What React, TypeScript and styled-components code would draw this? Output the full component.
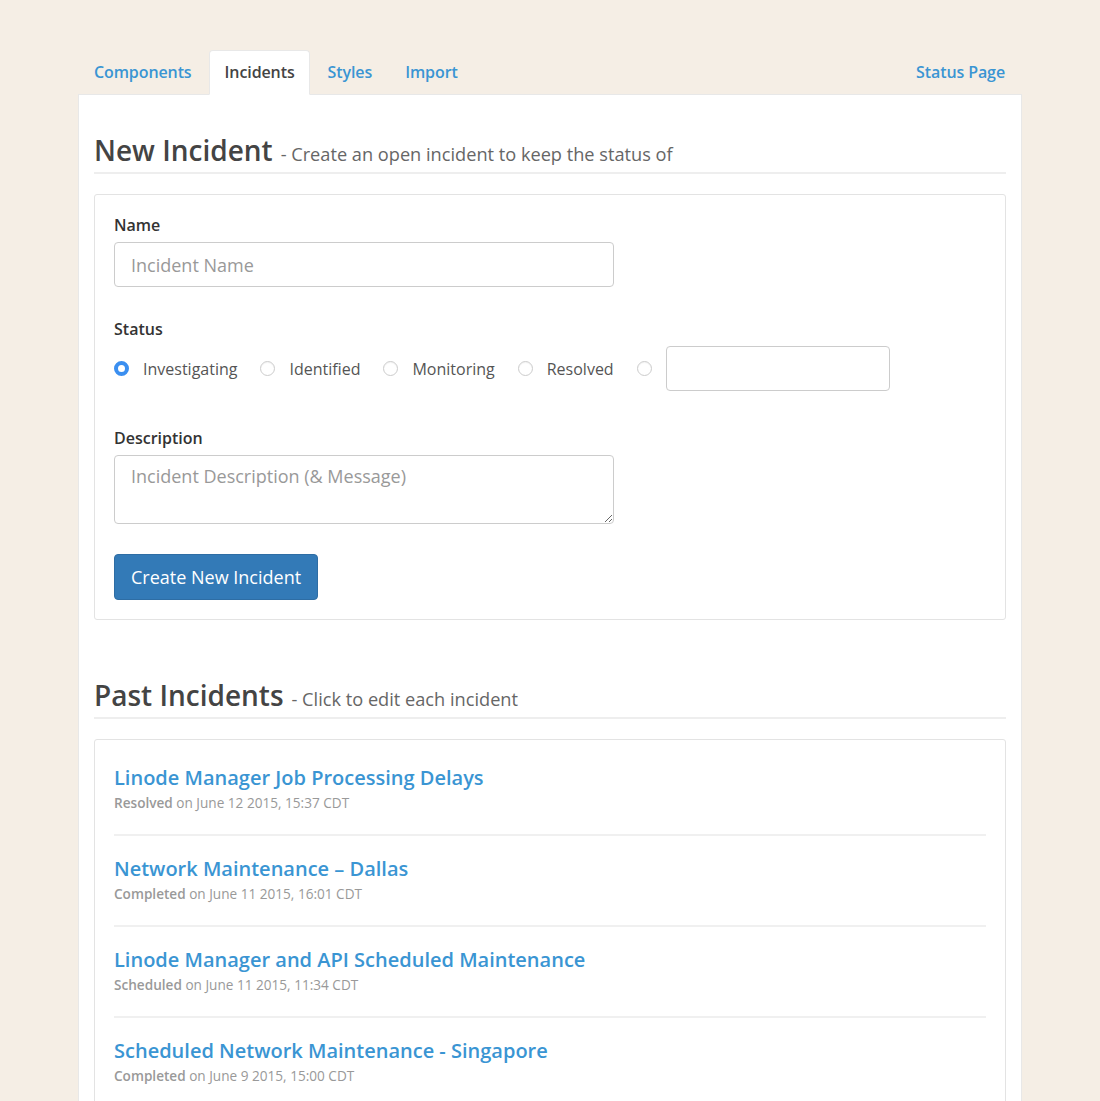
import React from 'react';
import styled, { createGlobalStyle } from 'styled-components';

const GlobalStyle = createGlobalStyle`
  html, body {
    margin: 0;
    padding: 0;
    background: #f5eee5;
    font-family: "Open Sans", "Noto Sans", sans-serif;
    color: #333;
  }
  * { box-sizing: border-box; }
`;

const Page = styled.div`
  width: 944px;
  margin: 0 auto;
  padding-top: 50px;
  height: 1101px;
  overflow: hidden;
`;

const Tabs = styled.div`
  display: flex;
  align-items: flex-end;
  margin-bottom: -1px;
  position: relative;
  z-index: 1;
`;

const Tab = styled.a<{ $active?: boolean }>`
  display: block;
  padding: 11px 14px 11px 15px;
  margin-right: 2px;
  font-size: 16px;
  font-weight: 600;
  line-height: 21px;
  letter-spacing: -0.1px;
  border: 1px solid ${p => (p.$active ? '#e8e8e8' : 'transparent')};
  border-bottom-color: ${p => (p.$active ? '#fff' : 'transparent')};
  border-radius: 4px 4px 0 0;
  background: ${p => (p.$active ? '#fff' : 'transparent')};
  color: ${p => (p.$active ? '#444' : '#3a95d3')};
  text-decoration: none;
  cursor: pointer;
`;

const Spacer = styled.div`
  flex: 1;
`;

const Card = styled.div`
  background: #fff;
  border: 1px solid #e8e8e8;
  padding: 15px 15px 0;
  min-height: 1100px;
`;

const PageHeader = styled.div<{ $top: number }>`
  margin-top: ${p => p.$top}px;
  padding-bottom: 5px;
  border-bottom: 2px solid #eee;
  display: flex;
  align-items: baseline;
`;

const Title = styled.h1`
  margin: 0;
  font-size: 28px;
  font-weight: 600;
  color: #444;
  line-height: 34px;
`;

const Subtitle = styled.span`
  margin-left: 8px;
  font-size: 18.2px;
  color: #666;
`;

const Panel = styled.div<{ $pad: string }>`
  margin-top: 20px;
  border: 1px solid #e3e3e3;
  border-radius: 3px;
  padding: ${p => p.$pad};
`;

const Field = styled.div<{ $gap?: number }>`
  margin-bottom: ${p => p.$gap ?? 30}px;
`;

const Label = styled.div`
  font-size: 16px;
  font-weight: 600;
  color: #333;
  line-height: 22px;
  margin-bottom: 6px;
`;

const TextInput = styled.input<{ $w: number }>`
  display: block;
  width: ${p => p.$w}px;
  height: 45px;
  border: 1px solid #ccc;
  border-radius: 4px;
  padding: 0 16px;
  font-family: inherit;
  font-size: 18px;
  color: #555;
  &::placeholder { color: #999; }
`;

const TextArea = styled.textarea`
  display: block;
  width: 500px;
  height: 69px;
  border: 1px solid #ccc;
  border-radius: 4px;
  padding: 8px 16px;
  font-family: inherit;
  font-size: 18px;
  color: #555;
  resize: vertical;
  &::placeholder { color: #999; }
`;

const RadioRow = styled.div`
  display: flex;
  align-items: center;
  margin-top: 6px;
`;

const RadioItem = styled.label`
  display: flex;
  align-items: center;
  margin-right: 23px;
  font-size: 16px;
  color: #555;
  cursor: pointer;
`;

const RadioCircle = styled.span<{ $checked?: boolean }>`
  width: 15px;
  height: 15px;
  border-radius: 50%;
  margin-right: 14px;
  flex: none;
  border: ${p => (p.$checked ? '4px solid #3b8ff0' : '1px solid #ccc')};
  background: #fff;
  box-shadow: ${p => (p.$checked ? 'none' : 'inset 0 1px 1px rgba(0,0,0,0.05)')};
`;

const CustomRadio = styled.div`
  display: flex;
  align-items: center;
`;

const Button = styled.button`
  display: block;
  height: 46px;
  padding: 0 16px;
  background: #337ab7;
  border: 1px solid #2e6da4;
  border-radius: 4px;
  color: #fff;
  font-family: inherit;
  font-size: 18px;
  cursor: pointer;
`;

const IncidentItem = styled.div<{ $last?: boolean }>`
  padding: 19px 0 22px;
  border-bottom: ${p => (p.$last ? 'none' : '2px solid #f0f0f0')};
  &:first-child { padding-top: 4px; }
`;

const IncidentTitle = styled.a`
  display: block;
  font-size: 20px;
  font-weight: 600;
  color: #3a95d3;
  line-height: 28px;
  text-decoration: none;
  cursor: pointer;
`;

const Meta = styled.div`
  font-size: 13.6px;
  color: #999;
  line-height: 18px;
  margin-top: 2px;
  b { font-weight: 600; color: #999; }
`;

const statuses = ['Investigating', 'Identified', 'Monitoring', 'Resolved'];

const incidents = [
  { title: 'Linode Manager Job Processing Delays', status: 'Resolved', date: 'June 12 2015, 15:37 CDT' },
  { title: 'Network Maintenance – Dallas', status: 'Completed', date: 'June 11 2015, 16:01 CDT' },
  { title: 'Linode Manager and API Scheduled Maintenance', status: 'Scheduled', date: 'June 11 2015, 11:34 CDT' },
  { title: 'Scheduled Network Maintenance - Singapore', status: 'Completed', date: 'June 9 2015, 15:00 CDT' },
];

export default function App() {
  return (
    <>
      <GlobalStyle />
      <Page>
        <Tabs>
          <Tab>Components</Tab>
          <Tab $active>Incidents</Tab>
          <Tab>Styles</Tab>
          <Tab>Import</Tab>
          <Spacer />
          <Tab>Status Page</Tab>
        </Tabs>
        <Card>
          <PageHeader $top={23}>
            <Title>New Incident</Title>
            <Subtitle>- Create an open incident to keep the status of</Subtitle>
          </PageHeader>
          <Panel $pad="19px 19px 19px">
            <Field $gap={31}>
              <Label>Name</Label>
              <TextInput $w={500} placeholder="Incident Name" />
            </Field>
            <Field $gap={36}>
              <Label>Status</Label>
              <RadioRow>
                {statuses.map((s, i) => (
                  <RadioItem key={s}>
                    <RadioCircle $checked={i === 0} />
                    {s}
                  </RadioItem>
                ))}
                <CustomRadio>
                  <RadioCircle />
                  <TextInput $w={224} />
                </CustomRadio>
              </RadioRow>
            </Field>
            <Field $gap={30}>
              <Label>Description</Label>
              <TextArea placeholder="Incident Description (& Message)" />
            </Field>
            <Button>Create New Incident</Button>
          </Panel>
          <PageHeader $top={58}>
            <Title>Past Incidents</Title>
            <Subtitle>- Click to edit each incident</Subtitle>
          </PageHeader>
          <Panel $pad="20px 19px">
            {incidents.map((it, i) => (
              <IncidentItem key={it.title} $last={i === incidents.length - 1}>
                <IncidentTitle>{it.title}</IncidentTitle>
                <Meta>
                  <b>{it.status}</b> on {it.date}
                </Meta>
              </IncidentItem>
            ))}
          </Panel>
        </Card>
      </Page>
    </>
  );
}
